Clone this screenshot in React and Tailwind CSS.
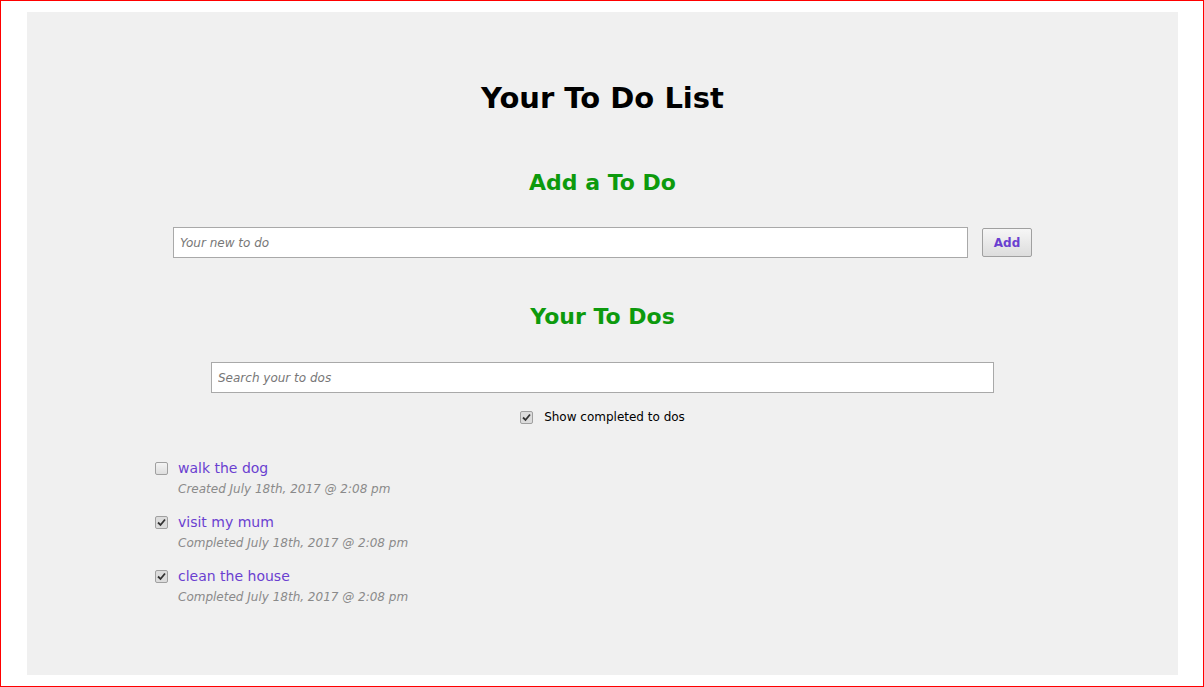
import React, { useState } from 'react';

const todos = [
    { id: 1, text: 'walk the dog', done: false, note: 'Created July 18th, 2017 @ 2:08 pm' },
    { id: 2, text: 'visit my mum', done: true, note: 'Completed July 18th, 2017 @ 2:08 pm' },
    { id: 3, text: 'clean the house', done: true, note: 'Completed July 18th, 2017 @ 2:08 pm' },
];

const Box = ({ checked }) => (
    <span className={`w-[13px] h-[13px] shrink-0 rounded-[2px] border border-[#a0a0a0] flex items-center justify-center ${checked ? 'bg-[#dcdcdc]' : 'bg-gradient-to-b from-[#f4f4f4] to-[#dedede]'}`}>
        {checked && (
            <svg width="9" height="9" viewBox="0 0 9 9">
                <path d="M1 4.5 L3.5 7 L8 1.5" fill="none" stroke="#333" strokeWidth="1.8" />
            </svg>
        )}
    </span>
);

const App = () => {
    const [newTodo, setNewTodo] = useState('');
    const [search, setSearch] = useState('');

    return (
        <div className="w-[1204px] h-[687px] border border-[#ff0000] bg-white box-border pt-[11px] pl-[26px]" style={{ fontFamily: '"Comic Sans MS", "DejaVu Sans", sans-serif' }}>
            <div className="w-[1151px] h-[663px] bg-[#f0f0f0] flex flex-col items-center">
                <h1 className="mt-[66px] text-[29px] leading-[40px] font-bold text-black">Your To Do List</h1>

                {/* Add */}
                <h2 className="mt-[50px] text-[22px] leading-[30px] font-bold text-[#0d9a0d]">Add a To Do</h2>
                <div className="mt-[29px] flex items-center gap-[14px]">
                    <input
                        value={newTodo}
                        onChange={(e) => setNewTodo(e.target.value)}
                        placeholder="Your new to do"
                        className="w-[795px] h-[31px] bg-white border border-[#a9a9a9] px-[6px] text-[12px] italic outline-none placeholder:text-[#777]"
                    />
                    <button className="w-[50px] h-[29px] border border-[#a0a0a0] rounded-[2px] bg-gradient-to-b from-[#f6f6f6] to-[#dddddd] text-[12px] font-bold text-[#6a3fd0]">Add</button>
                </div>

                {/* List */}
                <h2 className="mt-[44px] text-[22px] leading-[30px] font-bold text-[#0d9a0d]">Your To Dos</h2>
                <input
                    value={search}
                    onChange={(e) => setSearch(e.target.value)}
                    placeholder="Search your to dos"
                    className="mt-[30px] w-[783px] h-[31px] bg-white border border-[#a9a9a9] px-[6px] text-[12px] italic outline-none placeholder:text-[#777]"
                />
                <label className="mt-[16px] flex items-center gap-[11px] text-[12px] leading-[16px] text-black">
                    <Box checked />
                    <span>Show completed to dos</span>
                </label>

                <div className="self-start ml-[128px] mt-[33px] flex flex-col gap-[12px]">
                    {todos.map((t) => (
                        <div key={t.id} className="flex flex-col">
                            <div className="flex items-center gap-[10px]">
                                <Box checked={t.done} />
                                <span className="text-[14px] leading-[20px] text-[#6a3fd0]">{t.text}</span>
                            </div>
                            <span className="ml-[23px] text-[12px] leading-[22px] italic text-[#8a8a8a]">{t.note}</span>
                        </div>
                    ))}
                </div>
            </div>
        </div>
    );
};

export default App;
